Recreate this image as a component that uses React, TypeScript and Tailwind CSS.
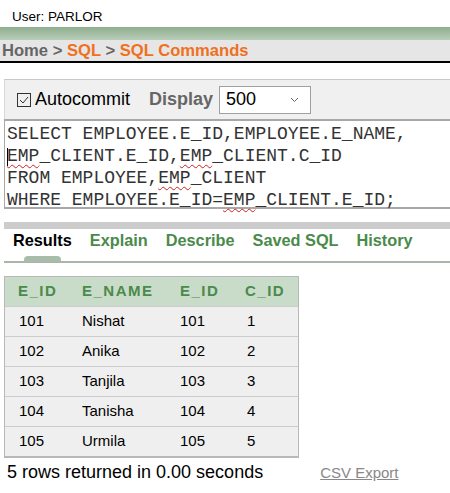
const rows = [
  ["101", "Nishat", "101", "1"],
  ["102", "Anika", "102", "2"],
  ["103", "Tanjila", "103", "3"],
  ["104", "Tanisha", "104", "4"],
  ["105", "Urmila", "105", "5"],
];

const squiggle = "underline decoration-wavy decoration-[#d02020] decoration-1 underline-offset-[3px]";

export default function App() {
  return (
    <div className="w-[450px] h-[493px] bg-white font-['Liberation_Sans',Arial,sans-serif] text-black overflow-hidden">
      <div className="h-[27px] pl-[12px] pt-[9px] text-[13.5px] leading-[15px]">User: PARLOR</div>
      <div className="h-[13px] bg-gradient-to-b from-[#8fae8f] to-[#b9cdb9]" />
      <div className="h-[23px] bg-[#e6e6e6] border-b-2 border-black pl-[2px] text-[16.6px] font-bold leading-[21px]">
        <span className="text-[#666666]">Home &gt; </span>
        <span className="text-[#f07021]">SQL</span>
        <span className="text-[#666666]"> &gt; </span>
        <span className="text-[#f07021]">SQL Commands</span>
      </div>

      <div className="mt-[16px] ml-[4px]">
        <div className="h-[40px] bg-[#f0f0f0] border-t border-[#c8c8c8] border-l border-l-[#d8d8d8] flex items-center pl-[12px]">
          <svg width="14" height="14" viewBox="0 0 14 14" fill="none" stroke="#333" strokeWidth="1">
            <rect x="0.5" y="0.5" width="13" height="13" />
            <path d="M3 7l3 3 5-6" />
          </svg>
          <span className="text-[18px] ml-[4px]">Autocommit</span>
          <span className="text-[18px] font-bold text-[#666666] ml-[19px]">Display</span>
          <div className="ml-[6px] w-[92px] h-[28px] bg-white border border-[#a0a0a0] flex items-center justify-between pl-[6px] pr-[11px]">
            <span className="text-[18px]">500</span>
            <svg width="9" height="6" viewBox="0 0 9 6" fill="none" stroke="#666" strokeWidth="1">
              <path d="M1 1l3.5 3.5L8 1" />
            </svg>
          </div>
        </div>
        <div className="h-[90px] border-t-2 border-b-2 border-l border-[#a8a8a8] bg-white pl-[2px] pt-[2px] font-['Liberation_Mono','Courier_New',monospace] text-[18px] leading-[22px] text-[#333333] whitespace-pre">
          <div>SELECT EMPLOYEE.E_ID,EMPLOYEE.E_NAME,</div>
          <div className="relative">
            <span className="absolute left-0 top-[3px] w-px h-[18px] bg-black" />
            <span className={squiggle}>EMP</span>_CLIENT.E_ID,<span className={squiggle}>EMP</span>_CLIENT.C_ID
          </div>
          <div>FROM EMPLOYEE,<span className={squiggle}>EMP</span>_CLIENT</div>
          <div>WHERE EMPLOYEE.E_ID=<span className={squiggle}>EMP</span>_CLIENT.E_ID;</div>
        </div>
      </div>

      <div className="mt-[13px] ml-[4px] h-[7px] bg-[#cccccc]" />
      <div className="ml-[4px] h-[21px] flex items-end gap-[18px] pl-[9px] text-[16.3px] font-bold leading-[20px]">
        <span className="text-black">Results</span>
        <span className="text-[#4a8a4a]">Explain</span>
        <span className="text-[#4a8a4a]">Describe</span>
        <span className="text-[#4a8a4a]">Saved SQL</span>
        <span className="text-[#4a8a4a]">History</span>
      </div>
      <div className="ml-[4px] mt-[11px] relative h-[2px] bg-[#a9b5a9]">
        <span className="absolute left-[20px] top-[-5px] w-[37px] h-[6px] rounded-t-[4px] bg-[#a9bca9]" />
      </div>

      <div className="mt-[13px] ml-[4px] w-[295px] border border-[#b8b8b8] border-b-2">
        <table className="w-full border-collapse text-[15px]">
          <thead>
            <tr className="h-[29px] bg-[#c9dcc9] text-[#4a8a4a] font-bold tracking-[1.5px] text-left">
              <th className="pl-[13px] w-[77px]">E_ID</th>
              <th className="w-[98px]">E_NAME</th>
              <th className="w-[65px]">E_ID</th>
              <th>C_ID</th>
            </tr>
          </thead>
          <tbody>
            {rows.map((r, i) => (
              <tr key={i} className="h-[30px] bg-[#efefef] border-t border-[#cccccc]">
                <td className="pl-[14px]">{r[0]}</td>
                <td>{r[1]}</td>
                <td>{r[2]}</td>
                <td className="pl-[2px]">{r[3]}</td>
              </tr>
            ))}
          </tbody>
        </table>
      </div>

      <div className="mt-[1px] flex items-baseline pl-[7px]">
        <span className="text-[18px]">5 rows returned in 0.00 seconds</span>
        <span className="ml-[57px] text-[15px] text-[#888888] underline">CSV Export</span>
      </div>
    </div>
  );
}
